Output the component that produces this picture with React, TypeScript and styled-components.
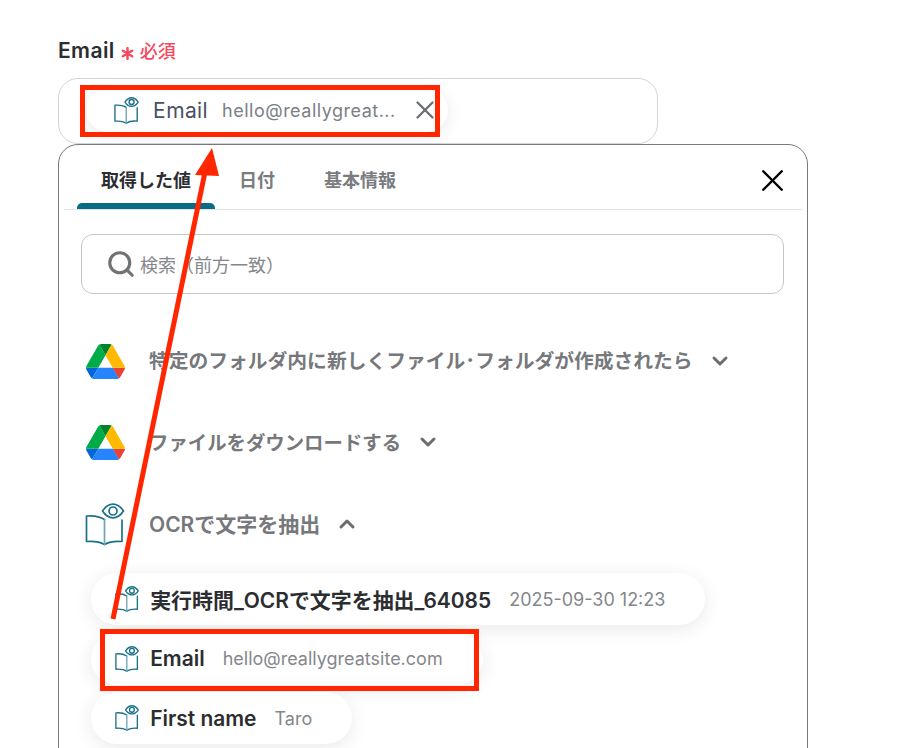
import { ChevronDown, ChevronUp, Search, X } from 'lucide-react';
import styled, { createGlobalStyle } from 'styled-components';

type OutputChip = {
  key: string;
  label: string;
  value: string;
};

const outputs: OutputChip[] = [
  { key: 'time', label: '実行時間_OCRで文字を抽出_64085', value: '2025-09-30 12:23' },
  { key: 'email', label: 'Email', value: 'hello@reallygreatsite.com' },
  { key: 'first', label: 'First name', value: 'Taro' },
];

const GlobalStyle = createGlobalStyle`
  html, body {
    margin: 0;
    height: 748px;
    overflow: hidden;
    background: #fff;
    font-family: Inter, "Noto Sans CJK JP", sans-serif;
  }
`;

const Page = styled.div`
  position: relative;
  width: 904px;
  height: 748px;
  overflow: hidden;
  padding: 39px 0 0 58px;
  box-sizing: border-box;
`;

const FieldLabel = styled.div`
  display: flex;
  align-items: center;
  gap: 6px;
  height: 22px;
  font-size: 21px;
  font-weight: 600;
  letter-spacing: 0.4px;
  color: #2b2d30;
`;

const Required = styled.span`
  display: flex;
  align-items: center;
  gap: 6px;
  font-size: 18px;
  font-weight: 500;
  letter-spacing: 0;
  color: #f5495f;
`;

const Asterisk = styled.svg`
  margin-top: 6px;
`;

const InputBox = styled.div`
  width: 600px;
  height: 66px;
  margin-top: 17px;
  padding: 9px 0 0 27px;
  box-sizing: border-box;
  border: 1px solid #d0d5dd;
  border-radius: 20px;
`;

const SelectedChip = styled.div`
  display: flex;
  align-items: center;
  width: 362px;
  height: 44px;
  box-sizing: border-box;
  padding: 0 8px 0 28px;
  border-radius: 22px;
  background: #fff;
  box-shadow: 0 4px 16px rgba(40, 50, 60, 0.1);
`;

const SelectedLabel = styled.span`
  margin-left: 14px;
  font-size: 21px;
  letter-spacing: 0.4px;
  color: #475261;
`;

const SelectedValue = styled.span`
  margin-left: 14px;
  font-size: 18px;
  letter-spacing: 0.5px;
  white-space: nowrap;
  color: #7b8087;
`;

const ClearIcon = styled(X)`
  flex: none;
  margin-left: auto;
  color: #6b6f75;
`;

const Panel = styled.div`
  width: 750px;
  height: 640px;
  box-sizing: border-box;
  border: 1px solid #77797c;
  border-radius: 20px;
  background: #fff;
  padding: 0 5px;
`;

const TabBar = styled.div`
  display: flex;
  align-items: stretch;
  height: 64px;
  border-bottom: 1px solid #e2e4e8;
  position: relative;
`;

const Tab = styled.div<{ $active?: boolean }>`
  position: relative;
  display: flex;
  align-items: center;
  justify-content: center;
  box-sizing: border-box;
  padding-top: 4px;
  width: ${(p) => (p.$active ? '138px' : 'auto')};
  margin: ${(p) => (p.$active ? '0 24px 0 13px' : '0 49px 0 0')};
  font-size: 18px;
  font-weight: 600;
  color: ${(p) => (p.$active ? '#2b2d30' : '#7a7c80')};

  &::after {
    content: '';
    display: ${(p) => (p.$active ? 'block' : 'none')};
    position: absolute;
    left: 0;
    right: 0;
    bottom: 0;
    height: 6px;
    background: #0a6b85;
    border-radius: 5px 5px 0 0;
  }
`;

const PanelClose = styled(X)`
  position: absolute;
  right: 11px;
  top: 17px;
  color: #000;
`;

const SearchBox = styled.div`
  display: flex;
  align-items: center;
  gap: 4px;
  width: 703px;
  height: 60px;
  margin: 24px 0 0 17px;
  padding-left: 24px;
  box-sizing: border-box;
  border: 1px solid #c4c6ca;
  border-radius: 12px;
  font-size: 18px;
  color: #84868a;
`;

const SearchIcon = styled(Search)`
  color: #707276;
`;

const StepList = styled.div`
  display: flex;
  flex-direction: column;
  margin: 25px 0 0 19px;
`;

const StepRow = styled.div`
  display: flex;
  align-items: center;
  height: 81.5px;
`;

const StepIcon = styled.span`
  display: flex;
  justify-content: center;
  width: 44px;
  margin-right: 22px;
  padding-top: 3px;
`;

const StepTitle = styled.span<{ $size: number }>`
  font-size: ${(p) => p.$size}px;
  font-weight: 600;
  color: #76787c;
`;

const StepChevron = styled.span`
  display: flex;
  margin: 2px 0 0 15px;
  color: #6b6d70;
`;

const ChipList = styled.div`
  display: flex;
  flex-direction: column;
  align-items: flex-start;
  gap: 7.5px;
  margin: 9.5px 0 0 27px;
`;

const OutputPill = styled.div`
  display: flex;
  align-items: center;
  height: 52px;
  padding: 0 40px 0 24px;
  box-sizing: border-box;
  border-radius: 26px;
  background: #fff;
  box-shadow: 0 4px 18px rgba(40, 50, 60, 0.1);
`;

const OutputLabel = styled.span`
  margin-left: 11px;
  font-size: 20.95px;
  font-weight: 600;
  color: #2b2d30;
`;

const OutputValue = styled.span`
  margin-left: 18px;
  font-size: 18px;
  color: #85878b;
`;

const Annotation = styled.svg`
  position: absolute;
  left: 0;
  top: 0;
  pointer-events: none;
`;

const BookIcon = ({ height = 26 }: { height?: number }) => (
  <svg
    width={(height * 40) / 43}
    height={height}
    viewBox="0 0 40 43"
    fill="none"
    stroke="#1b7189"
    strokeWidth={height > 30 ? 1.7 : 2.2}
    strokeLinejoin="round"
    strokeLinecap="round">
    <path d="M19.5 16.5 C15 13.5 8 12.5 1.5 13 V38.5 C8 38 14.5 38.5 19.5 41.5 C24.5 38.5 31 38 37 38.5 V17" />
    <path d="M19.5 16.5 V41.5" stroke="#6fa6b6" />
    <path d="M17.5 8 C20.5 3.5 24.5 1.2 28 1.2 C31.5 1.2 35.5 3.5 38.5 8 C35.5 12.5 31.5 14.8 28 14.8 C24.5 14.8 20.5 12.5 17.5 8 Z" fill="#fff" />
    <circle cx="28" cy="8" r="4" />
  </svg>
);

const DriveIcon = () => (
  <svg width="39" height="37" viewBox="0 0 87.3 78">
    <path d="m6.6 66.85 3.85 6.65c.8 1.4 1.95 2.5 3.3 3.3l13.75-23.8h-27.5c0 1.55.4 3.1 1.2 4.5z" fill="#0066da" />
    <path d="m43.65 25-13.75-23.8c-1.35.8-2.5 1.9-3.3 3.3l-25.4 44a9.06 9.06 0 0 0 -1.2 4.5h27.5z" fill="#00ac47" />
    <path d="m73.55 76.8c1.35-.8 2.5-1.9 3.3-3.3l1.6-2.75 7.65-13.25c.8-1.4 1.2-2.95 1.2-4.5h-27.5l5.85 11.5z" fill="#ea4335" />
    <path d="m43.65 25 13.75-23.8c-1.35-.8-2.9-1.2-4.5-1.2h-18.5c-1.6 0-3.15.45-4.5 1.2z" fill="#00832d" />
    <path d="m59.8 53h-32.3l-13.75 23.8c1.35.8 2.9 1.2 4.5 1.2h50.8c1.6 0 3.15-.45 4.5-1.2z" fill="#2684fc" />
    <path d="m73.4 26.5-12.7-22c-.8-1.4-1.95-2.5-3.3-3.3l-13.75 23.8 16.15 28h27.45c0-1.55-.4-3.1-1.2-4.5z" fill="#ffba00" />
  </svg>
);

export default function App() {
  return (
    <Page>
      <GlobalStyle />
      <FieldLabel>
        Email
        <Required>
          <Asterisk width="13" height="13" viewBox="0 0 14 14" stroke="#f5495f" strokeWidth="2.6" strokeLinecap="round">
            <path d="M7 1.2v11.6M2 4l10 6M12 4L2 10" />
          </Asterisk>
          必須
        </Required>
      </FieldLabel>
      <InputBox>
        <SelectedChip>
          <BookIcon height={27} />
          <SelectedLabel>Email</SelectedLabel>
          <SelectedValue>hello@reallygreat...</SelectedValue>
          <ClearIcon size={30} strokeWidth={1.85} />
        </SelectedChip>
      </InputBox>
      <Panel>
        <TabBar>
          <Tab $active>取得した値</Tab>
          <Tab>日付</Tab>
          <Tab>基本情報</Tab>
          <PanelClose size={37} strokeWidth={1.6} />
        </TabBar>
        <SearchBox>
          <SearchIcon size={30} strokeWidth={2.5} />
          検索（前方一致）
        </SearchBox>
        <StepList>
          <StepRow>
            <StepIcon><DriveIcon /></StepIcon>
            <StepTitle $size={19.77}>特定のフォルダ内に新しくファイル･フォルダが作成されたら</StepTitle>
            <StepChevron><ChevronDown size={24} strokeWidth={3} /></StepChevron>
          </StepRow>
          <StepRow>
            <StepIcon><DriveIcon /></StepIcon>
            <StepTitle $size={19.4}>ファイルをダウンロードする</StepTitle>
            <StepChevron><ChevronDown size={24} strokeWidth={3} /></StepChevron>
          </StepRow>
          <StepRow>
            <StepIcon><BookIcon height={43} /></StepIcon>
            <StepTitle $size={21}>OCRで文字を抽出</StepTitle>
            <StepChevron><ChevronUp size={24} strokeWidth={3} /></StepChevron>
          </StepRow>
        </StepList>
        <ChipList>
          {outputs.map((item) => (
            <OutputPill key={item.key}>
              <BookIcon />
              <OutputLabel>{item.label}</OutputLabel>
              <OutputValue>{item.value}</OutputValue>
            </OutputPill>
          ))}
        </ChipList>
      </Panel>
      <Annotation width="904" height="748" viewBox="0 0 904 748">
        <rect x="82.5" y="87.5" width="355" height="47" fill="none" stroke="#ff2600" strokeWidth="5" />
        <rect x="102.5" y="631.5" width="374" height="57" fill="none" stroke="#ff2600" strokeWidth="5" />
        <path d="M113 619 L205 172" stroke="#ff2600" strokeWidth="5" />
        <path d="M212 148 L195 175 L219 176 Z" fill="#ff2600" />
      </Annotation>
    </Page>
  );
}
